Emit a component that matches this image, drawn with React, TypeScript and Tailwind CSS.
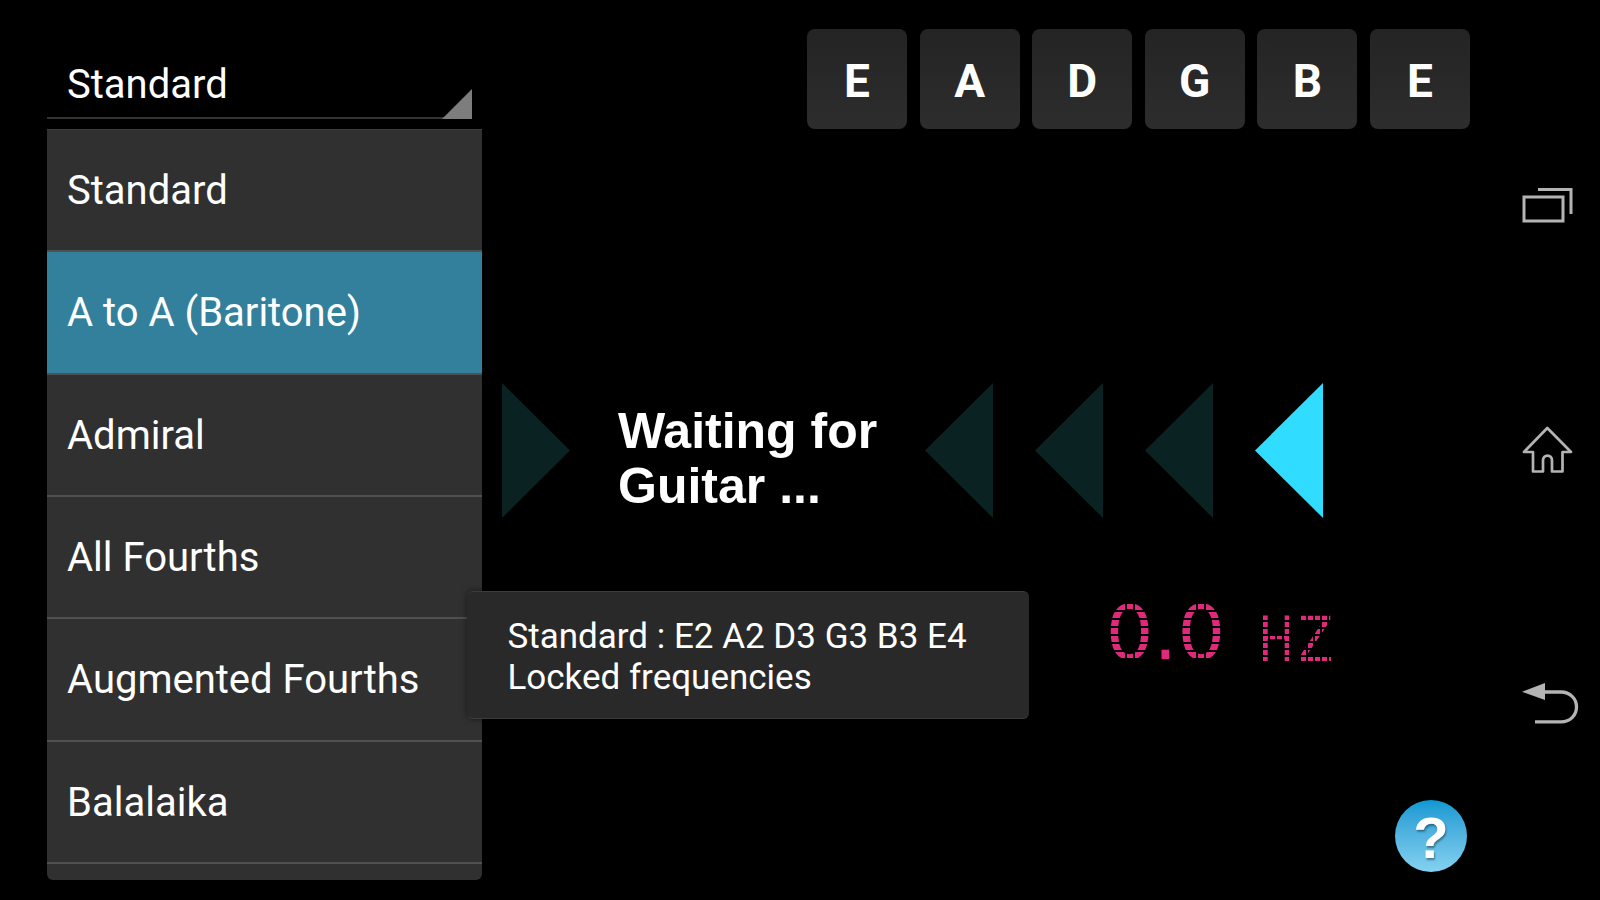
import { useState } from "react";
import clsx from "clsx";

const tunings = [
  "Standard",
  "A to A (Baritone)",
  "Admiral",
  "All Fourths",
  "Augmented Fourths",
  "Balalaika",
];

const strings = ["E", "A", "D", "G", "B", "E"];

const rightArrows = [
  { id: 1, active: false },
  { id: 2, active: false },
  { id: 3, active: false },
  { id: 4, active: true },
];

// black grids laid over the glyphs break their strokes into dots
const largeDots =
  "relative after:absolute after:inset-0 after:bg-[linear-gradient(to_right,transparent_19px,#000_19px_21px,transparent_21px_27px,#000_27px_29px,transparent_29px),repeating-linear-gradient(to_bottom,transparent_0_5px,#000_5px_7px,transparent_7px_8px)]";
const smallDots =
  "relative after:absolute after:inset-0 after:bg-[repeating-linear-gradient(to_right,transparent_0_4px,#000_4px_6px,transparent_6px_7px),repeating-linear-gradient(to_bottom,transparent_0_3px,#000_3px_5px,transparent_5px_7px)]";

function Arrow({
  direction,
  active = false,
}: {
  direction: "left" | "right";
  active?: boolean;
}) {
  return (
    <svg
      viewBox="0 0 68 135"
      className={clsx(
        "h-[135px] w-[68px] shrink-0",
        active ? "fill-[#30dcff]" : "fill-[#0a2222]",
      )}
      aria-hidden="true"
    >
      <path
        d={direction === "left" ? "M68 0V135L0 67.5Z" : "M0 0V135L68 67.5Z"}
      />
    </svg>
  );
}

function TuningPicker() {
  const [tuning, setTuning] = useState("Standard");
  const [highlighted, setHighlighted] = useState("A to A (Baritone)");

  return (
    <section className="flex w-[435px] shrink-0 flex-col pt-12 pb-5">
      <div className="relative mr-[10px]">
        <select
          aria-label="Tuning"
          value={tuning}
          onChange={(event) => setTuning(event.target.value)}
          className="block h-[71px] w-full appearance-none border-b-2 border-[#333333] bg-black pt-1 pl-5 text-[40px] leading-[60px] text-white outline-none"
        >
          {tunings.map((name) => (
            <option key={name}>{name}</option>
          ))}
        </select>
        <svg
          viewBox="0 0 30 30"
          className="pointer-events-none absolute right-0 bottom-0 size-[30px] fill-[#7d7d7d]"
          aria-hidden="true"
        >
          <path d="M30 0V30H0Z" />
        </svg>
      </div>

      <ul className="mt-[10px] flex flex-1 flex-col rounded-b-md border-t border-[#3d3d3d] bg-[#303030] pb-4">
        {tunings.map((name) => (
          <li key={name} className="flex flex-1 border-b-2 border-[#505050]">
            <button
              type="button"
              onMouseEnter={() => setHighlighted(name)}
              onClick={() => setTuning(name)}
              className={clsx(
                "w-full px-5 pt-[2px] text-left text-[40px] whitespace-nowrap text-white",
                name === highlighted && "bg-[#33809d]",
              )}
            >
              {name}
            </button>
          </li>
        ))}
      </ul>
    </section>
  );
}

function Frequency() {
  return (
    <div className="mt-[78px] mr-[137px] flex items-end gap-8 self-end leading-none text-[#e0297d]">
      <span className="font-['DejaVu_Sans'] text-[75px]">
        <span className={largeDots}>0</span>.
        <span className={largeDots}>0</span>
      </span>
      <span className="font-['DejaVu_Sans_Mono'] text-[63px]">
        <span className={smallDots}>H</span>
        <span className={smallDots}>Z</span>
      </span>
    </div>
  );
}

function SystemNav() {
  return (
    <nav className="flex w-[106px] shrink-0 flex-col items-center justify-between pt-[180px] pb-[170px]">
      <button type="button" aria-label="Recent apps">
        <svg
          viewBox="0 0 64 50"
          className="h-[50px] w-16 fill-none stroke-[#b4b4b4] stroke-[3]"
        >
          <path d="M9 17H48V41H9ZM23 9.5H56V34" />
        </svg>
      </button>
      <button type="button" aria-label="Home">
        <svg
          viewBox="0 0 64 62"
          className="h-[62px] w-16 fill-none stroke-[#b4b4b4] stroke-[2.7]"
        >
          <path
            strokeLinejoin="round"
            d="M32.3 4L9 28H18V47.5H28V36.5C28 30 37 30 37 36.5V47.5H47.5V28H56Z"
          />
        </svg>
      </button>
      <button type="button" aria-label="Back">
        <svg viewBox="0 0 64 50" className="h-[50px] w-16">
          <path
            d="M28 12H46C55 12 61.5 18.5 61.5 27C61.5 35.5 55 41.8 46 41.8H20"
            className="fill-none stroke-[#b4b4b4] stroke-[3.3]"
          />
          <path d="M7 11.8L30 3V20Z" className="fill-[#b4b4b4]" />
        </svg>
      </button>
    </nav>
  );
}

export default function App() {
  return (
    <div className="relative flex min-h-screen bg-black pl-[47px] font-['Roboto',sans-serif] text-white">
      <TuningPicker />

      <main className="flex min-w-0 flex-1 flex-col pt-[29px] pr-6 pb-7">
        <div className="flex w-[663px] justify-between self-end">
          {strings.map((note, index) => (
            <button
              key={index}
              type="button"
              className="size-[100px] rounded-lg bg-linear-to-b from-[#242424] to-[#2d2d2d] pt-1 text-[46px] font-bold"
            >
              {note}
            </button>
          ))}
        </div>

        <div className="mt-[254px] flex items-center pl-5">
          <Arrow direction="right" />
          <p className="ml-12 w-[263px] shrink-0 pt-4 font-['Liberation_Sans',sans-serif] text-[50px] leading-[55px] font-bold">
            Waiting for Guitar ...
          </p>
          <div className="ml-11 flex gap-[42px]">
            {rightArrows.map((arrow) => (
              <Arrow key={arrow.id} direction="left" active={arrow.active} />
            ))}
          </div>
        </div>

        <Frequency />

        <button
          type="button"
          aria-label="Help"
          className="mt-auto mr-[3px] size-[72px] self-end rounded-full bg-linear-to-b from-[#0798d2] to-[#83d2f0] pt-1 font-['Liberation_Sans',sans-serif] text-[58px] leading-none font-bold text-shadow-[1px_2px_2px_#00000060]"
        >
          ?
        </button>
      </main>

      <SystemNav />

      <div className="pointer-events-none absolute inset-x-0 bottom-[181px] flex justify-center pr-[104px]">
        <div
          role="status"
          className="rounded-md border-y border-[#3c3c3c] bg-[#292929] pt-6 pr-[62px] pb-5 pl-10 text-[35px] leading-[41px] shadow-[0_0_6px_#00000080]"
        >
          <p>Standard : E2 A2 D3 G3 B3 E4</p>
          <p>Locked frequencies</p>
        </div>
      </div>
    </div>
  );
}
